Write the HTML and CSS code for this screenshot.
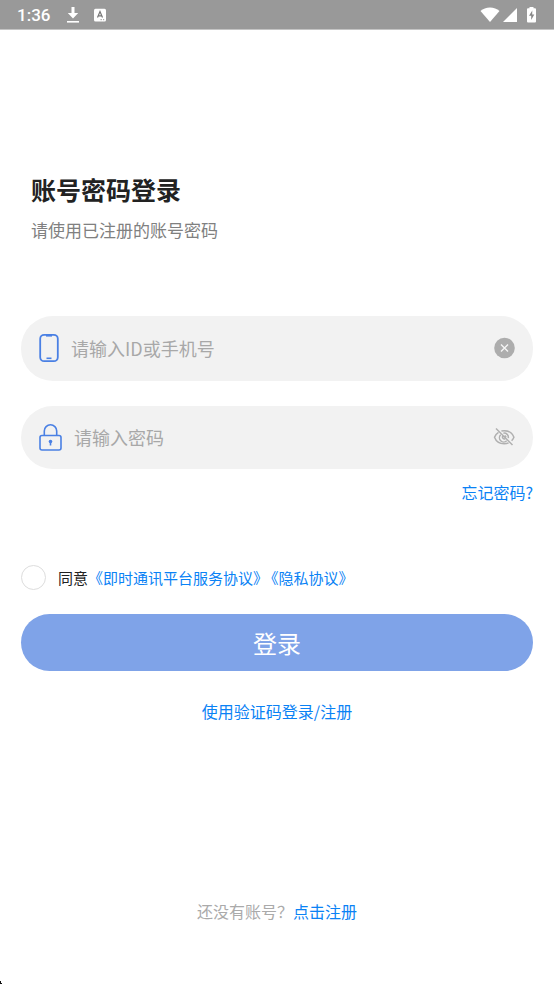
FILE: index.html
```html
<!DOCTYPE html>
<html lang="zh-CN">
<head>
<meta charset="utf-8">
<meta name="viewport" content="width=device-width, initial-scale=1">
<title>账号密码登录</title>
<link rel="stylesheet" href="styles.css">
</head>
<body>
<header class="status">
  <div class="status-left">
    <time class="clock">1:36</time>
    <svg class="ic-download" width="14" height="18" viewBox="0 0 14 18" fill="#fff" aria-hidden="true"><path d="M5.500 1h3v6h3.700L7 12.400 1.800 7h3.700z"/><path d="M1 15h12v1.600H1z"/></svg>
    <svg class="ic-a" width="12" height="14" viewBox="0 0 12 14" aria-hidden="true"><rect y=".8" width="12" height="12.600" rx="1.500" fill="#fff"/><path d="M3.500 9.500 6 3.500l2.500 6M4.200 7.900h3.600" fill="none" stroke="#777" stroke-width="1.200"/><path d="M6.500 11.700h1.400M9 11.700h1.200" stroke="#999" stroke-width="1"/></svg>
  </div>
  <div class="status-right">
    <svg width="20" height="16" viewBox="0 0 20 16" fill="#fff" aria-hidden="true"><path d="M.5 4C3 1.700 6.300.5 10 .5s7 1.200 9.500 3.500L10 15z"/></svg>
    <svg width="14" height="14" viewBox="0 0 14 14" fill="#fff" aria-hidden="true"><path d="M14 0v14H0z"/></svg>
    <svg class="ic-battery" width="9" height="16" viewBox="0 0 9 16" aria-hidden="true"><path d="M2.500 0h4v1.200h1.500a1 1 0 0 1 1 1V14.400a1 1 0 0 1-1 1H1a1 1 0 0 1-1-1V2.200a1 1 0 0 1 1-1h1.500z" fill="#fff"/><path d="M5.300 3.500 2 8.800h2.200V13L7.300 7.500H5.200z" fill="#888"/></svg>
  </div>
</header>
<main class="page">
  <div class="intro">
    <h1>账号密码登录</h1>
    <p>请使用已注册的账号密码</p>
  </div>
  <form class="form">
    <div class="field field-account">
      <svg width="20" height="30" viewBox="0 0 20 30" fill="none" stroke="#4a80e4" aria-hidden="true"><rect x="1.200" y="1.800" width="17.600" height="26.400" rx="4" stroke-width="1.800"/><path d="M7 2.700h6" stroke-width="1.800"/><path d="M7.500 25.300h5" stroke-width="1.600"/></svg>
      <input type="text" placeholder="请输入ID或手机号" aria-label="ID或手机号">
      <button type="button" class="icon-btn" aria-label="清除"><svg width="22" height="22" viewBox="0 0 22 22" aria-hidden="true"><circle cx="11.500" cy="11" r="10.300" fill="#adadad"/><path d="m8 7.500 7 7m0-7-7 7" stroke="#f5f5f5" stroke-width="1.400"/></svg></button>
    </div>
    <div class="field field-password">
      <svg width="23" height="28" viewBox="0 0 23 28" fill="none" stroke="#4a80e4" stroke-width="1.600" aria-hidden="true"><rect x="1" y="12.500" width="21" height="14.500" rx="2"/><path d="M5.300 12.500V8a6.200 6.200 0 0 1 12.400 0v4.500"/><circle cx="11.500" cy="18.500" r="1.800" fill="#4a80e4" stroke="none"/><path d="M11.500 18.500v4"/></svg>
      <input type="password" placeholder="请输入密码" aria-label="密码">
      <button type="button" class="icon-btn" aria-label="显示密码"><svg width="22" height="22" viewBox="0 0 22 22" fill="none" stroke="#b0b0b0" stroke-width="1.500" aria-hidden="true"><path d="M5.500 6.300C3.500 7.500 2.200 9.300 1.500 11.300c1.500 4 5.300 6.500 9.700 6.500 1.600 0 3.100-.3 4.400-.9M8.400 5c.9-.2 1.800-.3 2.800-.3 4.400 0 8.200 2.600 9.700 6.600-.5 1.300-1.300 2.500-2.300 3.500"/><path d="M7.700 8.800A4.200 4.200 0 0 0 13.700 14.800M10.400 7.200A4.200 4.200 0 0 1 15.300 12.100M9.700 10.100A2 2 0 0 0 12.200 12.900M11.700 9.500 13.200 11.200M3 2.500l16.500 16.500"/></svg></button>
    </div>
    <a class="forgot" href="#">忘记密码?</a>
    <div class="agree">
      <input type="checkbox" id="agree">
      <span class="terms"><label for="agree">同意</label><a href="#">《即时通讯平台服务协议》</a><a href="#">《隐私协议》</a></span>
    </div>
    <button type="submit" class="submit">登录</button>
    <a class="switch" href="#">使用验证码登录/注册</a>
  </form>
  <p class="register">还没有账号？<a href="#">点击注册</a></p>
</main>
<svg class="corner" width="2" height="4" viewBox="0 0 2 4" aria-hidden="true"><path d="M0 1h1v2h1v1H0z" fill="#111"/></svg>
</body>
</html>
```
FILE: styles.css
```css
* { box-sizing: border-box; }
body {
  margin: 0;
  min-height: 100vh;
  display: flex;
  flex-direction: column;
  background: #fff;
  color: #222;
  font-family: "Noto Sans CJK SC", sans-serif;
  font-size: 16px;
  line-height: 24px;
}
a { color: #0a82f5; text-decoration: none; }
button { border: 0; padding: 0; font: inherit; cursor: pointer; }
svg { display: block; flex: none; }
h1, p { margin: 0; }

.status {
  display: flex;
  justify-content: space-between;
  height: 30px;
  padding: 0 18px 0 17px;
  background: #999;
  border-bottom: 1px solid #c4c4c4;
}
.status-left, .status-right { display: flex; align-items: center; }
.clock {
  font: 500 17px/30px Roboto, sans-serif;
  color: #fff;
}
.ic-download { margin-left: 16px; }
.ic-a { margin-left: 14px; }
.status-right { gap: 3px; }
.ic-battery { margin-left: 7px; }

.page {
  flex: 1;
  display: flex;
  flex-direction: column;
  padding: 141px 21px 61px;
}
.intro { padding: 0 10px; }
h1 { font-size: 25px; line-height: 36px; font-weight: 700; }
.intro p { margin-top: 11px; font-size: 17px; color: #808080; }

.form { display: flex; flex-direction: column; margin-top: 74px; }
.field {
  display: flex;
  align-items: center;
  padding: 0 18px 2px;
  border-radius: 32px;
  background: #f2f2f2;
}
.field-account { height: 65px; }
.field-password { height: 63px; margin-top: 25px; }
.field input {
  flex: 1;
  min-width: 0;
  padding: 0;
  margin-left: 12px;
  border: 0;
  outline: 0;
  background: none;
  color: #222;
  font: inherit;
  font-size: 18px;
}
.field input::placeholder { color: #a8a8a8; opacity: 1; }
.icon-btn { background: none; }

.forgot { align-self: flex-end; margin-top: 11px; }

.agree {
  display: flex;
  align-items: center;
  gap: 12px;
  margin-top: 61px;
  font-size: 15px;
}
.agree input {
  appearance: none;
  width: 25px;
  height: 25px;
  margin: 0;
  border: 1px solid #ddd;
  border-radius: 50%;
}
.agree input:checked { background: #7fa3e8; }
.terms a + a { margin-left: 3px; }

.submit {
  height: 57px;
  margin-top: 24px;
  border-radius: 29px;
  background: #7fa3e8;
  color: #fff;
  font-size: 24px;
}
.switch { align-self: center; margin-top: 28px; }
.register { margin-top: auto; text-align: center; color: #aaa; }
.corner { position: absolute; left: 0; bottom: 0; }
```
